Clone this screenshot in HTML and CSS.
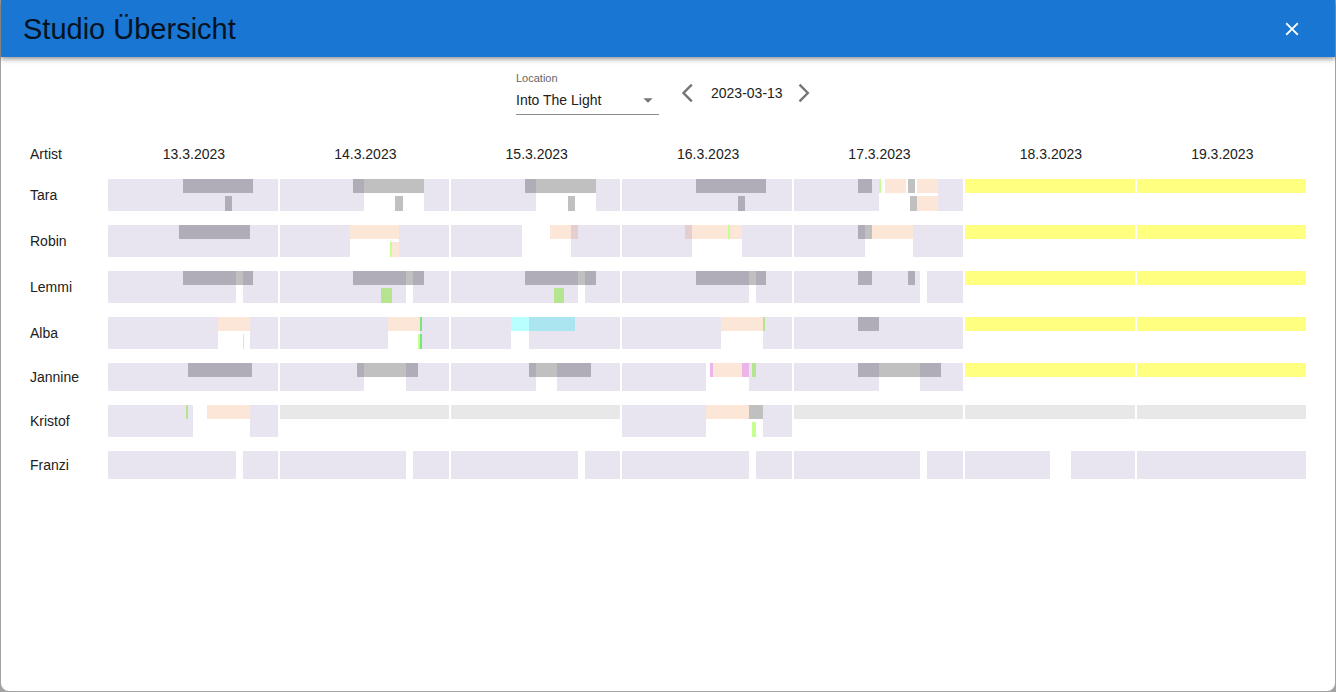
FILE: index.html
```html
<!DOCTYPE html>
<html lang="de">
<head>
<meta charset="utf-8">
<title>Studio Übersicht</title>
<link rel="stylesheet" href="styles.css">
</head>
<body>
<main class="dialog">
  <header class="app-bar">
    <h1 class="title">Studio Übersicht</h1>
    <button class="icon-button close" type="button" aria-label="Schließen">
      <svg width="22" height="22" viewBox="0 0 24 24"><path fill="currentColor" d="M19 6.41 17.59 5 12 10.59 6.41 5 5 6.41 10.59 12 5 17.59 6.41 19 12 13.41 17.59 19 19 17.59 13.41 12z"/></svg>
    </button>
  </header>
  <section class="toolbar">
    <div class="field">
      <label class="field-label" for="location">Location</label>
      <div class="select-wrap">
        <select class="select" id="location"><option>Into The Light</option></select>
        <svg class="caret" width="22" height="22" viewBox="0 0 24 24"><path fill="currentColor" d="m7 10 5 5 5-5z"/></svg>
      </div>
    </div>
    <div class="week-nav">
      <button class="icon-button" type="button" aria-label="Vorherige Woche">
        <svg width="20" height="20" viewBox="0 0 20 20"><path class="chevron" d="M14.800 1.700 6.500 10l8.300 8.300"/></svg>
      </button>
      <time class="date">2023-03-13</time>
      <button class="icon-button" type="button" aria-label="Nächste Woche">
        <svg width="20" height="20" viewBox="0 0 20 20"><path class="chevron" d="M5.500 1.700 13.800 10l-8.300 8.300"/></svg>
      </button>
    </div>
  </section>
  <table class="schedule">
    <thead>
      <tr class="row head">
        <th class="name">Artist</th><th>13.3.2023</th><th>14.3.2023</th><th>15.3.2023</th><th>16.3.2023</th><th>17.3.2023</th><th>18.3.2023</th><th>19.3.2023</th>
      </tr>
    </thead>
    <tbody id="rows"></tbody>
  </table>
</main>
<script src="schedule.js"></script>
</body>
</html>
```

FILE: styles.css
```css
* { box-sizing: border-box; }

body {
  margin: 0;
  min-height: 100vh;
  display: flex;
  background: #a3a3a3;
  color: #212121;
  font: 14px/20px "Liberation Sans", Arial, sans-serif;
}

.dialog {
  flex: 1;
  margin: 0 1px 1px;
  background: #fff;
  border-radius: 0 0 8px 8px;
}

.app-bar {
  display: flex;
  align-items: center;
  justify-content: space-between;
  height: 57px;
  padding: 0 23px 0 22px;
  background: #1976d2;
  box-shadow: 0 2px 4px rgba(0, 0, 0, .3), 0 1px 8px rgba(0, 0, 0, .2);
}

.title {
  margin: 0;
  color: #06121f;
  font-size: 29px;
  font-weight: 400;
  line-height: 40px;
}

.icon-button {
  display: flex;
  align-items: center;
  justify-content: center;
  width: 32px;
  height: 32px;
  padding: 0;
  border: 0;
  background: none;
  color: #757575;
  cursor: pointer;
}

.close {
  width: 40px;
  height: 40px;
  color: #fff;
}

.chevron {
  fill: none;
  stroke: currentColor;
  stroke-width: 2.4;
}

.toolbar {
  display: flex;
  align-items: center;
  justify-content: center;
  gap: 12px;
  padding: 14px 0 0;
}

.field {
  display: flex;
  flex-direction: column;
  width: 143px;
}

.field-label {
  color: #666;
  font-size: 11px;
  line-height: 14px;
}

.select-wrap {
  display: grid;
  align-items: center;
  height: 30px;
  border-bottom: 1px solid #8c8c8c;
}

.select {
  grid-area: 1 / 1;
  width: 100%;
  height: 29px;
  padding: 0;
  border: 0;
  appearance: none;
  background: none;
  color: inherit;
  font: inherit;
}

.caret {
  grid-area: 1 / 1;
  justify-self: end;
  color: #757575;
  pointer-events: none;
}

.week-nav {
  display: flex;
  align-items: center;
}

.date {
  width: 85px;
  padding-left: 8px;
}

.schedule {
  display: block;
  margin: 29px 27px 0 29px;
}

.schedule thead,
.schedule tbody { display: block; }

.row {
  display: grid;
  grid-template-columns: 21fr repeat(7, 46fr);
  padding-bottom: 14px;
}

.head { padding-bottom: 15px; }

.schedule th {
  padding: 0;
  font-weight: 400;
  text-align: center;
}

.schedule .name {
  align-self: center;
  text-align: left;
}

.day {
  display: grid;
  grid-template-columns: repeat(170, minmax(0, 1fr));
  grid-template-rows: 14px 3px 15px;
  margin-right: 2px;
  padding: 0;
}

.short .day { grid-template-rows: 14px 14px; }

.lane1 { grid-row: 1; }
.lane2 { grid-row: 3; }

.off {
  grid-row: 1 / -1;
  background: rgba(46, 19, 119, .11);
}

.gray { background: #c0c0c0; }
.peach { background: #fce6d8; }
.lime { background: #c6ff91; }
.green { background: #80ff80; }
.cyan { background: #baffff; }
.pink { background: #ecb4e8; }
.yellow { background: #ffff80; }
.closed { background: #e8e8e8; }
```

FILE: schedule.js
```js
// Each day is a list of "kind start end [lane]" entries on a 170-step scale.
const ALL = "off 0 170";
const FREE = "yellow 0 170";
const CLOSED = "closed 0 170";
const EVENING = "off 0 127, off 134 170";

const artists = [
  { name: "Tara", days: [
    "gray 75 145, gray 117 124 2, " + ALL,
    "gray 74 145, gray 116 124 2, off 0 85, off 145 170",
    "gray 74 145, gray 117 124 2, off 0 85, off 145 170",
    "gray 74 144, gray 116 123 2, " + ALL,
    "gray 64 78, lime 85 87, peach 92 113, gray 115 122, peach 124 145, gray 117 124 2, peach 124 145 2, off 0 85, off 145 170",
    FREE, FREE] },
  { name: "Robin", days: [
    "gray 71 142, " + ALL,
    "peach 71 120, lime 111 113 2, peach 113 120 2, off 0 71, off 120 170",
    "peach 99 127, off 0 71, off 120 170",
    "peach 63 106, lime 106 108, peach 108 120, off 0 70, off 120 170",
    "gray 64 78, peach 78 120, off 0 71, off 120 170",
    FREE, FREE] },
  { name: "Lemmi", days: [
    "gray 75 145, off 0 128, off 135 170",
    "gray 74 145, lime 102 113 2, " + EVENING,
    "gray 74 145, lime 103 113 2, " + EVENING,
    "gray 74 144, " + EVENING,
    "gray 64 78, gray 115 122, " + EVENING,
    FREE, FREE] },
  { name: "Alba", days: [
    "peach 110 142, lime 135 136 2, off 0 110, off 142 170",
    "peach 109 141, green 141 143, lime 139 141 2, green 141 143 2, off 0 109, off 141 170",
    "cyan 60 124, off 0 60, off 78 170",
    "peach 99 141, lime 141 143, off 0 99, off 141 170",
    "gray 64 85, " + ALL,
    FREE, FREE] },
  { name: "Jannine", short: true, days: [
    "gray 80 144, " + ALL,
    "gray 78 139, off 0 85, off 127 170",
    "gray 78 140, off 0 85, off 106 170",
    "pink 88 91, peach 91 120, pink 120 127, lime 130 134, off 0 84, off 127 170",
    "gray 64 148, off 0 85, off 127 170",
    FREE, FREE] },
  { name: "Kristof", days: [
    "lime 78 80, peach 99 142, off 0 85, off 142 170",
    CLOSED, CLOSED,
    "peach 84 127, gray 127 141, lime 130 134 2, off 0 84, off 141 170",
    CLOSED, CLOSED, CLOSED] },
  { name: "Franzi", short: true, days: [
    "off 0 128, off 135 170", EVENING, EVENING, EVENING, EVENING,
    "off 0 85, off 106 170", ALL] }
];

const tbody = document.getElementById("rows");
for (const artist of artists) {
  const row = tbody.insertRow();
  row.className = artist.short ? "row short" : "row";
  const name = document.createElement("th");
  name.className = "name";
  name.scope = "row";
  name.textContent = artist.name;
  row.append(name);
  for (const day of artist.days) {
    const cell = row.insertCell();
    cell.className = "day";
    for (const entry of day.split(", ")) {
      const [kind, start, end, lane = "1"] = entry.split(" ");
      const bar = document.createElement("div");
      bar.className = kind === "off" ? "off" : `${kind} lane${lane}`;
      bar.style.gridColumn = `${+start + 1} / ${+end + 1}`;
      cell.append(bar);
    }
  }
}
```
